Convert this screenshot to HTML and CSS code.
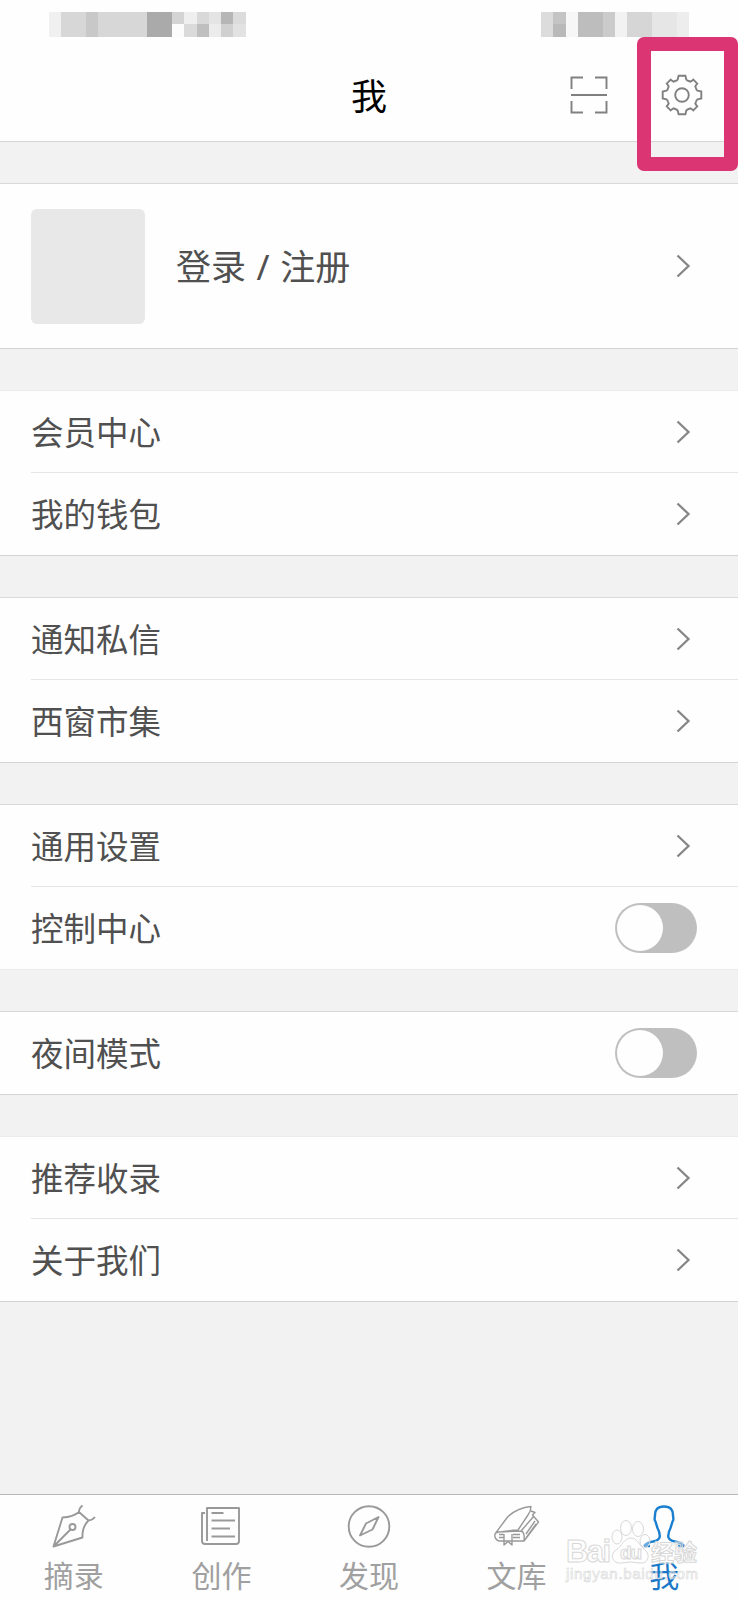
FILE: index.html
```html
<!DOCTYPE html>
<html lang="zh-CN">
<head>
  <meta charset="UTF-8">
  <title>我</title>
  <meta name="viewport" content="width=device-width, initial-scale=1.0">
  <link rel="stylesheet" href="styles.css">
</head>
<body>

  <svg class="defs" width="0" height="0">
    <symbol id="chevron" viewBox="0 0 16 24">
      <path d="M1.500 1.500L12.500 12L1.500 22.500" />
    </symbol>
  </svg>

  <header>
    <div class="status">
      <svg width="197" height="25" shape-rendering="crispEdges">
        <path fill="#f0f0f0" d="M0 0h12v25H0z" />
        <path fill="#d7d7d7" d="M12 0h25v25H12z" />
        <path fill="#c8c8c8" d="M37 0h12v25H37z" />
        <path fill="#d7d7d7" d="M49 0h49v25H49z" />
        <path fill="#aaa" d="M98 0h25v25H98z" />
        <path fill="#d4d4d4" d="M123 0h12v12h-12z" />
        <path fill="#efefef" d="M135 0h13v12h-13z" />
        <path fill="#d9d9d9" d="M148 0h12v12h-12z" />
        <path fill="#e4e4e4" d="M160 0h12v12h-12z" />
        <path fill="#b6b6b6" d="M172 0h12v12h-12z" />
        <path fill="#dcdcdc" d="M184 0h13v12h-13z" />
        <path fill="#fcfcfc" d="M123 12h12v13h-12z" />
        <path fill="#dadada" d="M135 12h13v13h-13z" />
        <path fill="#bfbfbf" d="M148 12h12v13h-12z" />
        <path fill="#ececec" d="M160 12h12v13h-12z" />
        <path fill="#d0d0d0" d="M172 12h12v13h-12z" />
        <path fill="#e2e2e2" d="M184 12h13v13h-13z" />
      </svg>
      <svg width="148" height="25" shape-rendering="crispEdges">
        <path fill="#dcdcdc" d="M0 0h12v25H0z" />
        <path fill="#c4c4c4" d="M12 0h13v12H12z" />
        <path fill="#b9b9b9" d="M12 12h13v13H12z" />
        <path fill="#f7f7f7" d="M25 0h12v25H25z" />
        <path fill="#bdbdbd" d="M37 0h25v25H37z" />
        <path fill="#cbcbcb" d="M62 0h12v25H62z" />
        <path fill="#f2f2f2" d="M74 0h12v25H74z" />
        <path fill="#d6d6d6" d="M86 0h25v25H86z" />
        <path fill="#e6e6e6" d="M111 0h25v25h-25z" />
        <path fill="#ededed" d="M136 0h12v25h-12z" />
      </svg>
    </div>
    <div class="bar">
      <h1>我</h1>
      <div class="actions">
        <svg class="scan" width="38" height="38" viewBox="0 0 38 38">
          <path d="M1.5 13V1.5H13M25 1.5H36.5V13M36.5 25V36.5H25M13 36.5H1.5V25M1 19H37" />
        </svg>
        <svg class="gear" width="42" height="42" viewBox="-21 -21 42 42">
          <circle r="6.8" />
          <path d="M-3.4 -19.3H3.4L4.3 -15.6Q5 -14.4 6.8 -14L8.5 -13.300Q10 -14 11.300 -15.300L15.300 -11.300Q14 -10 13.300 -8.500L14 -6.8Q14.4 -5 15.6 -4.3L19.3 -3.4V3.4L15.6 4.3Q14.4 5 14 6.8L13.3 8.5Q14 10 15.300 11.300L11.300 15.300Q10 14 8.500 13.300L6.8 14Q5 14.4 4.3 15.6L3.4 19.3H-3.4L-4.3 15.6Q-5 14.4 -6.8 14L-8.5 13.3Q-10 14 -11.300 15.300L-15.300 11.300Q-14 10 -13.300 8.500L-14 6.8Q-14.4 5 -15.6 4.3L-19.3 3.4V-3.4L-15.6 -4.3Q-14.4 -5 -14 -6.8L-13.3 -8.5Q-14 -10 -15.300 -11.300L-11.300 -15.300Q-10 -14 -8.500 -13.300L-6.8 -14Q-5 -14.4 -4.3 -15.6Z" />
        </svg>
      </div>
    </div>
    <div class="highlight"></div>
  </header>

  <main>
    <section class="group">
      <div class="profile">
        <div class="avatar"></div>
        <span>登录 / 注册</span>
        <svg class="chevron"><use href="#chevron" /></svg>
      </div>
    </section>

    <section class="group light-top">
      <div class="row"><span>会员中心</span><svg class="chevron"><use href="#chevron" /></svg></div>
      <div class="row"><span>我的钱包</span><svg class="chevron"><use href="#chevron" /></svg></div>
    </section>

    <section class="group">
      <div class="row"><span>通知私信</span><svg class="chevron"><use href="#chevron" /></svg></div>
      <div class="row"><span>西窗市集</span><svg class="chevron"><use href="#chevron" /></svg></div>
    </section>

    <section class="group light-bottom">
      <div class="row"><span>通用设置</span><svg class="chevron"><use href="#chevron" /></svg></div>
      <div class="row"><span>控制中心</span><div class="switch"></div></div>
    </section>

    <section class="group">
      <div class="row"><span>夜间模式</span><div class="switch"></div></div>
    </section>

    <section class="group light-top">
      <div class="row"><span>推荐收录</span><svg class="chevron"><use href="#chevron" /></svg></div>
      <div class="row"><span>关于我们</span><svg class="chevron"><use href="#chevron" /></svg></div>
    </section>
  </main>

  <nav>
    <div class="tab">
      <svg width="46" height="46" viewBox="0 0 46 46">
        <path d="M2.5 43.5L11.500 14.5Q22 14 28 9L37.500 17.5Q31 24 31.5 34.5ZM2.5 43.5L19.5 26.5M31.500 2.500Q28 5 28 9L37.500 17.5Q41 17.500 44 14" />
        <circle cx="21.5" cy="24" r="3" />
      </svg>
      <span>摘录</span>
    </div>
    <div class="tab">
      <svg width="46" height="46" viewBox="0 0 46 46">
        <path d="M9 38V5H41V38Q41 41 38 41H7Q4 41 4 38V10H7M13.500 10H25.500M13.500 17.500H37M13.500 25.500H32M13.500 33.500H37" />
      </svg>
      <span>创作</span>
    </div>
    <div class="tab">
      <svg width="46" height="46" viewBox="0 0 46 46">
        <circle cx="23" cy="23.500" r="20.300" />
        <path d="M32.500 14L20 20.500L14 32.500L26.500 26.500Z" />
      </svg>
      <span>发现</span>
    </div>
    <div class="tab">
      <svg class="thin" width="46" height="46" viewBox="0 0 46 46">
        <path d="M1 31Q9 20 14 13.500Q24 4.500 37 3.500Q37 8 34 12L24 27Q14 27.500 3 29.500M37 8L41 9.500L38.500 12L44.500 19L30 38H5Q0 36 1 31L3 29L27 28Q31 29 30 38M40 13L27 28M41 18L32 31M42 21L32 35M5 31.500H10M19 31.500H26M5 34.500H10M19 34.500H26M10 31V42L14 38.500L18 42V31" />
      </svg>
      <span>文库</span>
    </div>
    <div class="tab active">
      <svg width="46" height="46" viewBox="0 0 46 46">
        <path d="M3 43Q6 39.500 12 38.500Q19 37 18.800 33Q18.500 28.500 16.500 25Q15.500 22 14.500 18.500Q13 17 14 13Q13.500 3.500 23 3.500Q32.500 3.500 32 13Q33 17 31.500 18.500Q30.500 22 29.500 25Q27.500 28.500 27.200 33Q27 37 34 38.500Q40 39.500 43 43M3 43H9M37 43H43" />
      </svg>
      <span>我</span>
    </div>
  </nav>

  <!-- watermark over the tab bar -->
  <svg class="watermark" width="150" height="68" viewBox="0 0 150 68">
    <g class="paw">
      <ellipse cx="53" cy="21" rx="5" ry="7" />
      <ellipse cx="62" cy="12" rx="5.500" ry="7.500" />
      <ellipse cx="74" cy="13" rx="5.500" ry="7.500" />
      <ellipse cx="81" cy="25" rx="5" ry="6.500" />
      <path d="M67 22C60 22 58 30 52 34C45 39 49 48 57 47Q66 45 76 47C84 48 87 39 81 34C75 30 74 22 67 22Z" />
    </g>
    <text class="brand" x="2" y="46" textLength="45">Bai</text>
    <text class="du" x="56" y="43" textLength="22">du</text>
    <text class="cn" x="87" y="45" textLength="46">经验</text>
    <text class="url" x="2" y="63" textLength="132">jingyan.baidu.com</text>
  </svg>

</body>
</html>
```

FILE: styles.css
```css
* {
  box-sizing: border-box;
}
body {
  margin: 0;
  height: 1600px;
  display: flex;
  flex-direction: column;
  position: relative;
  overflow: hidden;
  font-family: "Noto Sans", "Noto Sans CJK SC", sans-serif;
  background: #f2f2f2;
  color: #505050;
}
svg {
  display: block;
  fill: none;
  stroke: #808080;
  stroke-width: 1.9;
}
.defs {
  position: absolute;
}

/* Header */
header {
  position: relative;
  height: 142px;
  background: #fefefe;
  border-bottom: 1px solid #d5d7d6;
}
.status {
  display: flex;
  justify-content: space-between;
  padding: 12px 49px 0;
}
.status svg {
  stroke: none;
}
.bar {
  display: grid;
  grid-template-columns: 1fr auto 1fr;
  align-items: center;
  height: 104px;
  padding: 12px 35px 0;
}
h1 {
  grid-column: 2;
  margin: 0;
  padding-top: 4px;
  font-size: 36px;
  line-height: 50px;
  font-weight: 400;
  color: #000;
}
.actions {
  display: flex;
  justify-content: flex-end;
  align-items: center;
  gap: 53px;
}
/* Marker frame round the settings button */
.highlight {
  position: absolute;
  left: 637px;
  top: 37px;
  width: 101px;
  height: 134px;
  border: 14px solid #db3573;
  border-radius: 7px;
}

/* Setting groups */
main {
  flex: 1;
  padding-top: 41px;
}
.group {
  margin-bottom: 41px;
  background: #fefefe;
  border-top: 1px solid #d8d8d8;
  border-bottom: 1px solid #d4d4d4;
}
.light-top {
  border-top-color: #ebebeb;
}
.light-bottom {
  border-bottom-color: #ebebeb;
}
.profile {
  display: flex;
  align-items: center;
  height: 164px;
  padding: 0 46px 0 31px;
  font-size: 35px;
  word-spacing: 1.5px;
}
.avatar {
  width: 114px;
  height: 115px;
  margin-right: 31px;
  background: #e8e8e8;
  border-radius: 6px;
}
.row {
  display: flex;
  align-items: center;
  height: 82px;
  margin-left: 31px;
  padding-right: 46px;
  font-size: 32.5px;
}
.row + .row {
  box-shadow: 0 -1px #e6e6e6;
}
.row span,
.profile span {
  flex: 1;
  line-height: 48px;
  padding-top: 1px;
}
.chevron {
  width: 16px;
  height: 24px;
  stroke: #868686;
  stroke-width: 2.3;
}
.switch {
  width: 82px;
  height: 50px;
  margin-right: -5px;
  padding: 2px;
  background: #bfbfbf;
  border-radius: 25px;
}
.switch::before {
  content: '';
  display: block;
  width: 46px;
  height: 46px;
  background: #fefefe;
  border-radius: 50%;
}

/* Tab bar */
nav {
  display: flex;
  height: 106px;
  background: #fefefe;
  border-top: 1px solid #b8b8b8;
}
.tab {
  flex: 1;
  display: flex;
  flex-direction: column;
  align-items: center;
  padding-top: 8px;
  font-size: 30px;
  color: #a0a0a0;
}
.tab span {
  line-height: 44px;
  margin-top: 5px;
}
.tab svg {
  stroke: #999;
  stroke-linejoin: round;
}
.tab svg.thin {
  stroke-width: 1.4;
}
.tab.active {
  color: #1a78c8;
}
.tab.active svg {
  stroke: #1a7fcf;
  stroke-width: 2.4;
}

.watermark {
  position: absolute;
  left: 564px;
  top: 1516px;
  font-family: "Liberation Sans", "Noto Sans CJK SC", sans-serif;
  font-weight: bold;
  stroke: #d8d8d8;
  stroke-width: 1;
  fill: rgba(255, 255, 255, 0.35);
}
.brand {
  font-size: 31px;
}
.du {
  font-size: 19px;
}
.cn {
  font-size: 23px;
}
.url {
  font-size: 15px;
  font-weight: normal;
  stroke-width: 0.6;
}
```
